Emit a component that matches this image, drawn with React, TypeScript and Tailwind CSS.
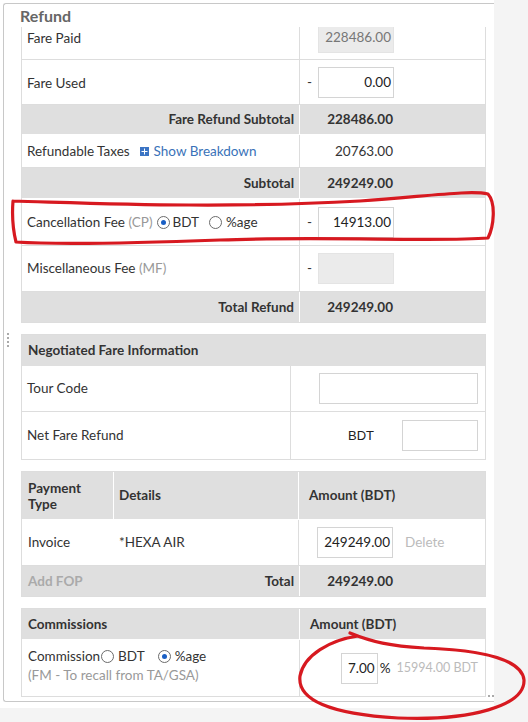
import { ReactNode } from "react";

type BoxProps = {
    value?: string;
    w?: string;
    disabled?: boolean;
};

function Box({ value = "", w = "w-[76px]", disabled = false }: BoxProps) {
    return (
        <div
            className={`${w} h-[31px] shrink-0 flex items-center justify-end pr-[2px] border ${
                disabled ? "bg-[#ebebeb] border-[#e4e4e4] text-[#777]" : "bg-white border-[#d4d4d4] text-[#222]"
            }`}
        >
            {value}
        </div>
    );
}

function Radio({ checked = false }: { checked?: boolean }) {
    return (
        <span className="w-[13px] h-[13px] shrink-0 rounded-full border border-[#6b6b6b] bg-white flex items-center justify-center">
            {checked && <span className="w-[5px] h-[5px] rounded-full bg-[#1a5fc4]" />}
        </span>
    );
}

function Dash({ children, hide = false }: { children: ReactNode; hide?: boolean }) {
    return (
        <div className="flex items-center pl-[7px]">
            <span className="w-[11px]">{hide ? "" : "-"}</span>
            {children}
        </div>
    );
}

function WhiteRow({ h, left, right }: { h: string; left: ReactNode; right: ReactNode }) {
    return (
        <div className={`grid grid-cols-[278px_1fr] ${h} border-b border-[#ddd]`}>
            <div className="flex items-center pl-[5px] border-r border-[#ddd]">{left}</div>
            {right}
        </div>
    );
}

function GrayRow({ h, label, value, last = false }: { h: string; label: string; value: string; last?: boolean }) {
    return (
        <div className={`grid grid-cols-[278px_1fr] ${h} bg-[#dfdfdf] font-bold ${last ? "" : "border-b border-white"}`}>
            <div className="flex items-center justify-end pr-[5px] border-r border-white">{label}</div>
            <div className="flex items-center pl-[17px]">
                <span className="w-[76px] text-right">{value}</span>
            </div>
        </div>
    );
}

export default function App() {
    return (
        <div className="relative w-[528px] min-h-[722px] bg-[#f4f4f4] font-['Lato','Noto_Sans',sans-serif] text-[13.5px] text-[#333] overflow-hidden">
            <div className="w-[494px] h-[708px] bg-white pt-[3px] pl-[3px]">
                <div className="relative h-[699px] flex flex-col rounded-l-[3px] border-y border-l border-[#c8c8c8]">
                    <div className="h-[23px] shrink-0 pl-[16px] pt-[3px] text-[16px] leading-[18px] font-bold text-[#666]">Refund</div>

                    {/* grip */}
                    <div className="absolute left-[3px] top-[329px] flex flex-col gap-[2px]">
                        <span className="w-[2px] h-[2px] bg-[#aaa]" />
                        <span className="w-[2px] h-[2px] bg-[#aaa]" />
                        <span className="w-[2px] h-[2px] bg-[#aaa]" />
                        <span className="w-[2px] h-[2px] bg-[#aaa]" />
                    </div>

                    <div className="flex-1 overflow-hidden pl-[17px] pr-[8px]">
                        <div className="-mt-[13px] flex flex-col gap-[11px]">
                            {/* fare table */}
                            <div className="border border-[#ddd]">
                                <WhiteRow
                                    h="h-[45px]"
                                    left={<span className="pt-[2px]">Fare Paid</span>}
                                    right={<Dash hide><Box value="228486.00" disabled /></Dash>}
                                />
                                <WhiteRow
                                    h="h-[45px]"
                                    left={<span className="pt-[2px]">Fare Used</span>}
                                    right={<Dash><Box value="0.00" /></Dash>}
                                />
                                <GrayRow h="h-[30px]" label="Fare Refund Subtotal" value="228486.00" />
                                <WhiteRow
                                    h="h-[33px]"
                                    left={
                                        <div className="flex items-center">
                                            <span>Refundable Taxes</span>
                                            <svg width="9" height="9" viewBox="0 0 9 9" className="ml-[10px] mr-[5px]">
                                                <rect x="0" y="0" width="9" height="9" fill="#3b74c4" />
                                                <rect x="4" y="1.5" width="1" height="6" fill="#fff" />
                                                <rect x="1.5" y="4" width="6" height="1" fill="#fff" />
                                            </svg>
                                            <span className="text-[#3a72b8]">Show Breakdown</span>
                                        </div>
                                    }
                                    right={
                                        <div className="flex items-center pl-[17px]">
                                            <span className="w-[76px] text-right">20763.00</span>
                                        </div>
                                    }
                                />
                                <GrayRow h="h-[31px]" label="Subtotal" value="249249.00" />
                                <WhiteRow
                                    h="h-[47px]"
                                    left={
                                        <div className="flex items-center">
                                            <span>Cancellation Fee <span className="text-[#999]">(CP)</span></span>
                                            <span className="ml-[4px]"><Radio checked /></span>
                                            <span className="ml-[3px]">BDT</span>
                                            <span className="ml-[10px]"><Radio /></span>
                                            <span className="ml-[4px]">%age</span>
                                        </div>
                                    }
                                    right={<Dash><Box value="14913.00" /></Dash>}
                                />
                                <WhiteRow
                                    h="h-[46px]"
                                    left={<span>Miscellaneous Fee <span className="text-[#999]">(MF)</span></span>}
                                    right={<Dash><Box disabled /></Dash>}
                                />
                                <GrayRow h="h-[30px]" label="Total Refund" value="249249.00" last />
                            </div>

                            {/* negotiated fare */}
                            <div className="border border-[#ddd]">
                                <div className="h-[31px] bg-[#dfdfdf] flex items-center pl-[6px] font-bold">Negotiated Fare Information</div>
                                <div className="grid grid-cols-[269px_1fr] h-[46px] border-b border-[#ddd]">
                                    <div className="flex items-center pl-[5px] border-r border-[#ddd]">Tour Code</div>
                                    <div className="flex items-center justify-end pr-[7px]">
                                        <Box w="w-[159px]" />
                                    </div>
                                </div>
                                <div className="grid grid-cols-[269px_1fr] h-[47px]">
                                    <div className="flex items-center pl-[5px] border-r border-[#ddd]">Net Fare Refund</div>
                                    <div className="flex items-center justify-end pr-[7px]">
                                        <span className="font-['Liberation_Sans',Arial,sans-serif] text-[13px] text-[#222] mr-[28px]">BDT</span>
                                        <Box />
                                    </div>
                                </div>
                            </div>

                            {/* payments */}
                            <div className="border border-[#ddd]">
                                <div className="grid grid-cols-[92px_185px_1fr] h-[48px] bg-[#dfdfdf] font-bold border-b border-white">
                                    <div className="flex items-center pl-[6px] leading-[16px] border-r border-white">Payment<br />Type</div>
                                    <div className="flex items-center pl-[5px] border-r border-white">Details</div>
                                    <div className="flex items-center pl-[10px]">Amount (BDT)</div>
                                </div>
                                <div className="grid grid-cols-[92px_185px_1fr] h-[46px] border-b border-[#ddd]">
                                    <div className="flex items-center pl-[6px]">Invoice</div>
                                    <div className="flex items-center pl-[5px] border-r border-[#ddd]">*HEXA AIR</div>
                                    <div className="flex items-center pl-[18px]">
                                        <Box value="249249.00" />
                                        <span className="ml-[12px] text-[#bbb]">Delete</span>
                                    </div>
                                </div>
                                <div className="grid grid-cols-[278px_1fr] h-[30px] bg-[#dfdfdf] font-bold">
                                    <div className="flex items-center justify-between pl-[6px] pr-[5px] border-r border-white">
                                        <span className="text-[#aaa]">Add FOP</span>
                                        <span>Total</span>
                                    </div>
                                    <div className="flex items-center pl-[17px]">
                                        <span className="w-[76px] text-right">249249.00</span>
                                    </div>
                                </div>
                            </div>

                            {/* commissions */}
                            <div className="border border-[#ddd]">
                                <div className="grid grid-cols-[278px_1fr] h-[31px] bg-[#dfdfdf] font-bold border-b border-white">
                                    <div className="flex items-center pl-[6px] border-r border-white">Commissions</div>
                                    <div className="flex items-center pl-[10px]">Amount (BDT)</div>
                                </div>
                                <div className="grid grid-cols-[278px_1fr] h-[56px]">
                                    <div className="pl-[6px] pt-[7px] leading-[19px] border-r border-[#ddd]">
                                        <div className="flex items-center">
                                            <span>Commission</span>
                                            <span className="ml-[1px]"><Radio /></span>
                                            <span className="ml-[4px]">BDT</span>
                                            <span className="ml-[13px]"><Radio checked /></span>
                                            <span className="ml-[4px]">%age</span>
                                        </div>
                                        <div className="text-[#999]">(FM - To recall from TA/GSA)</div>
                                    </div>
                                    <div className="flex items-center justify-end pr-[7px]">
                                        <Box w="w-[37px]" value="7.00" />
                                        <span className="ml-[2px] text-[#222]">%</span>
                                        <span className="ml-[6px] text-[12.5px] text-[#bbb]">15994.00 BDT</span>
                                    </div>
                                </div>
                            </div>
                        </div>
                    </div>
                </div>
            </div>

            {/* resize handle */}
            <div className="absolute left-[488px] top-[695px] flex gap-[2px]">
                <span className="w-[2px] h-[2px] bg-[#aaa]" />
                <span className="w-[2px] h-[2px] bg-[#aaa]" />
            </div>

            {/* hand drawn annotations */}
            <svg className="absolute left-0 top-0 pointer-events-none" width="528" height="722" viewBox="0 0 528 722" fill="none">
                <path
                    d="M13 201 C 90 203 220 209 360 201 C 430 196 470 190 488 194 C 496 203 494 226 488 238 C 440 242 320 236 220 240 C 140 243 60 245 16 242 C 13 230 12 214 13 201"
                    stroke="#d71920"
                    strokeWidth="3.2"
                    strokeLinecap="round"
                    strokeLinejoin="round"
                />
                <path
                    d="M358 636 C 330 640 304 655 300 676 C 297 700 330 714 398 718 C 470 721 525 706 524 680 C 522 660 484 650 424 648 C 390 646 372 642 350 633"
                    stroke="#d71920"
                    strokeWidth="3.2"
                    strokeLinecap="round"
                    strokeLinejoin="round"
                />
            </svg>
        </div>
    );
}
